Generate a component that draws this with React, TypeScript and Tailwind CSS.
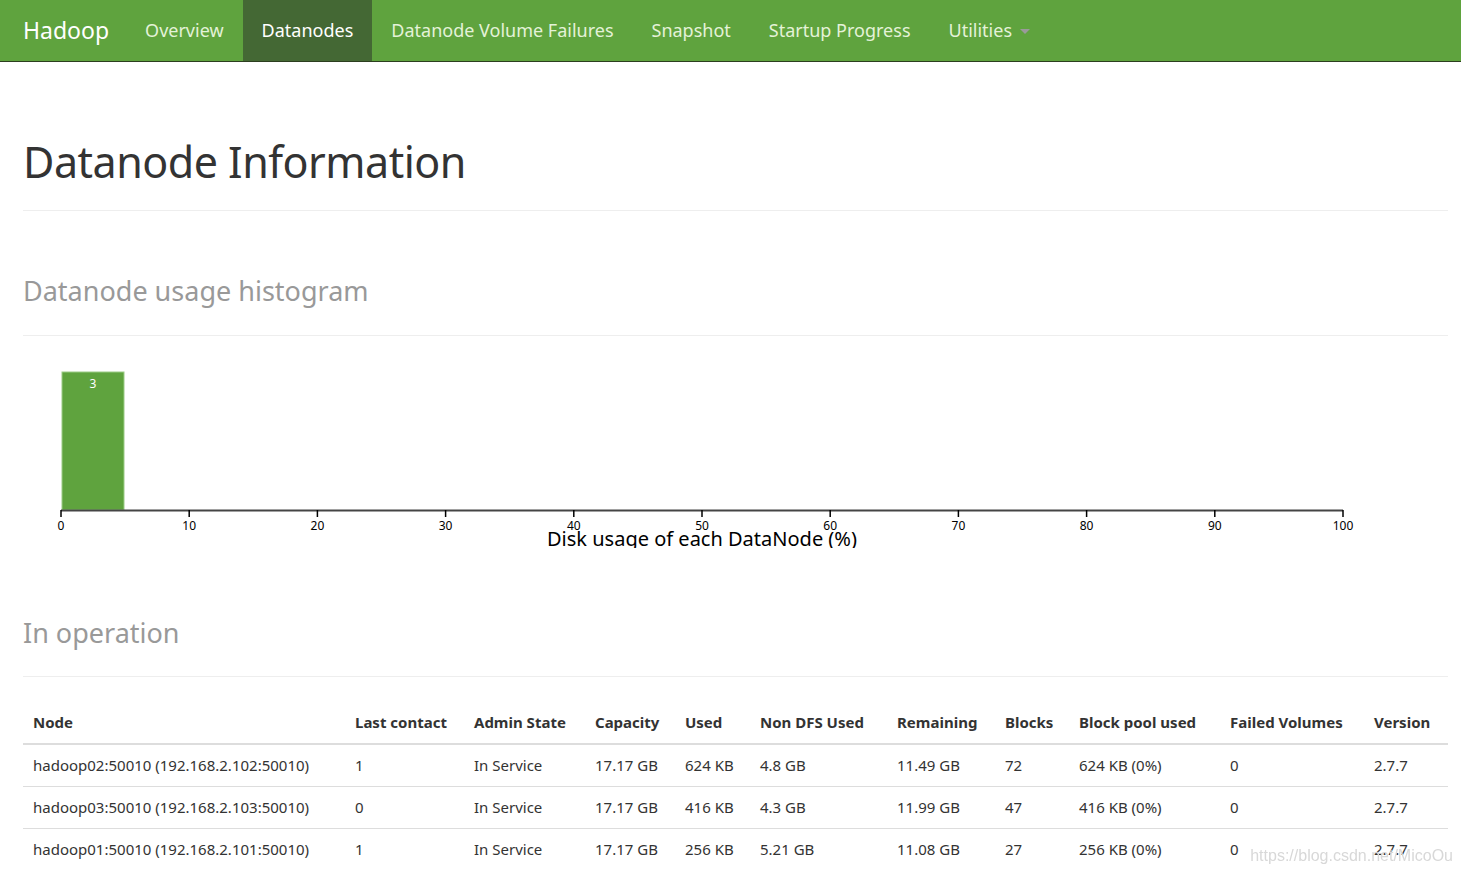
import React from 'react';

const navItems = ['Overview', 'Datanodes', 'Datanode Volume Failures', 'Snapshot', 'Startup Progress'];

const columns = [
  { label: 'Node', w: 'w-[322px]' },
  { label: 'Last contact', w: 'w-[119px]' },
  { label: 'Admin State', w: 'w-[121px]' },
  { label: 'Capacity', w: 'w-[90px]' },
  { label: 'Used', w: 'w-[75px]' },
  { label: 'Non DFS Used', w: 'w-[137px]' },
  { label: 'Remaining', w: 'w-[108px]' },
  { label: 'Blocks', w: 'w-[74px]' },
  { label: 'Block pool used', w: 'w-[151px]' },
  { label: 'Failed Volumes', w: 'w-[144px]' },
  { label: 'Version', w: 'w-[84px]' },
];

const rows = [
  ['hadoop02:50010 (192.168.2.102:50010)', '1', 'In Service', '17.17 GB', '624 KB', '4.8 GB', '11.49 GB', '72', '624 KB (0%)', '0', '2.7.7'],
  ['hadoop03:50010 (192.168.2.103:50010)', '0', 'In Service', '17.17 GB', '416 KB', '4.3 GB', '11.99 GB', '47', '416 KB (0%)', '0', '2.7.7'],
  ['hadoop01:50010 (192.168.2.101:50010)', '1', 'In Service', '17.17 GB', '256 KB', '5.21 GB', '11.08 GB', '27', '256 KB (0%)', '0', '2.7.7'],
];

function Histogram() {
  const x0 = 38;
  const step = 128.2;
  const axisY = 174.5;
  const ticks = Array.from({ length: 11 }, (_, i) => i * 10);
  return (
    <svg width="1425" height="212" className="block">
      <rect x={x0 + 1} y={36} width={62} height={138} fill="#5fa33e" stroke="#9ccc86" strokeWidth={1} />
      <text x={x0 + 32} y={52} fill="#fff" fontSize="12" textAnchor="middle">3</text>
      <line x1={x0} y1={axisY} x2={x0 + step * 10} y2={axisY} stroke="#444" strokeWidth={2} />
      {ticks.map((t, i) => (
        <g key={t}>
          <line x1={x0 + i * step} y1={axisY - 0.5} x2={x0 + i * step} y2={axisY + 6.5} stroke="#000" strokeWidth={1.5} />
          <text x={x0 + i * step} y={194} fontSize="12" textAnchor="middle" fill="#000">{t}</text>
        </g>
      ))}
      <text x={x0 + step * 5} y={210} fontSize="20" textAnchor="middle" fill="#000">Disk usage of each DataNode (%)</text>
    </svg>
  );
}

export default function App() {
  return (
    <div className="min-h-screen bg-white text-[#333]" style={{ fontFamily: '"Noto Sans", "Open Sans", sans-serif' }}>
      <nav className="h-[62px] bg-[#5fa33e] border-b border-[#2c3e1f] flex items-stretch px-[4px]">
        <div className="flex items-center pl-[19px] pr-[17px] text-[23px] text-white">Hadoop</div>
        {navItems.map((item) => (
          <div
            key={item}
            className={`flex items-center px-[19px] text-[18px] ${item === 'Datanodes' ? 'bg-[#446834] text-white' : 'text-[#e4f2d8]'}`}
          >
            {item}
          </div>
        ))}
        <div className="flex items-center px-[19px] text-[18px] text-[#e4f2d8]">
          Utilities
          <span className="ml-[8px] mt-[2px] w-0 h-0 border-l-[5px] border-r-[5px] border-t-[5px] border-l-transparent border-r-transparent border-t-[#9a9a9a]" />
        </div>
      </nav>

      <div className="px-[23px] pr-[13px]">
        <div className="pt-[76px] pb-[25px] border-b border-[#eee]">
          <h1 className="text-[43px] leading-[1.1] tracking-[-0.5px]">Datanode Information</h1>
        </div>

        <div className="pt-[65px] pb-[29px] border-b border-[#eee]">
          <h2 className="text-[27px] leading-[1.1] text-[#999]">Datanode usage histogram</h2>
        </div>

        <Histogram />

        <div className="pt-[70px] pb-[28px] border-b border-[#eee]">
          <h2 className="text-[27px] leading-[1.1] text-[#999]">In operation</h2>
        </div>

        <table className="mt-[26px] w-[1425px] table-fixed border-collapse text-[15px]">
          <thead>
            <tr className="border-b-2 border-[#ddd]">
              {columns.map((c) => (
                <th key={c.label} className={`${c.w} text-left font-bold px-[10px] pt-[8px] pb-[10px]`}>{c.label}</th>
              ))}
            </tr>
          </thead>
          <tbody>
            {rows.map((r, i) => (
              <tr key={i} className={i < rows.length - 1 ? 'border-b border-[#ddd]' : ''}>
                {r.map((cell, j) => (
                  <td key={j} className="px-[10px] h-[42px] align-middle whitespace-nowrap">{cell}</td>
                ))}
              </tr>
            ))}
          </tbody>
        </table>
      </div>

      <div className="fixed right-[8px] bottom-[8px] text-[16px] text-[#d8d8d8]" style={{ fontFamily: '"Liberation Sans", Arial, sans-serif' }}>
        https://blog.csdn.net/MicoOu
      </div>
    </div>
  );
}
